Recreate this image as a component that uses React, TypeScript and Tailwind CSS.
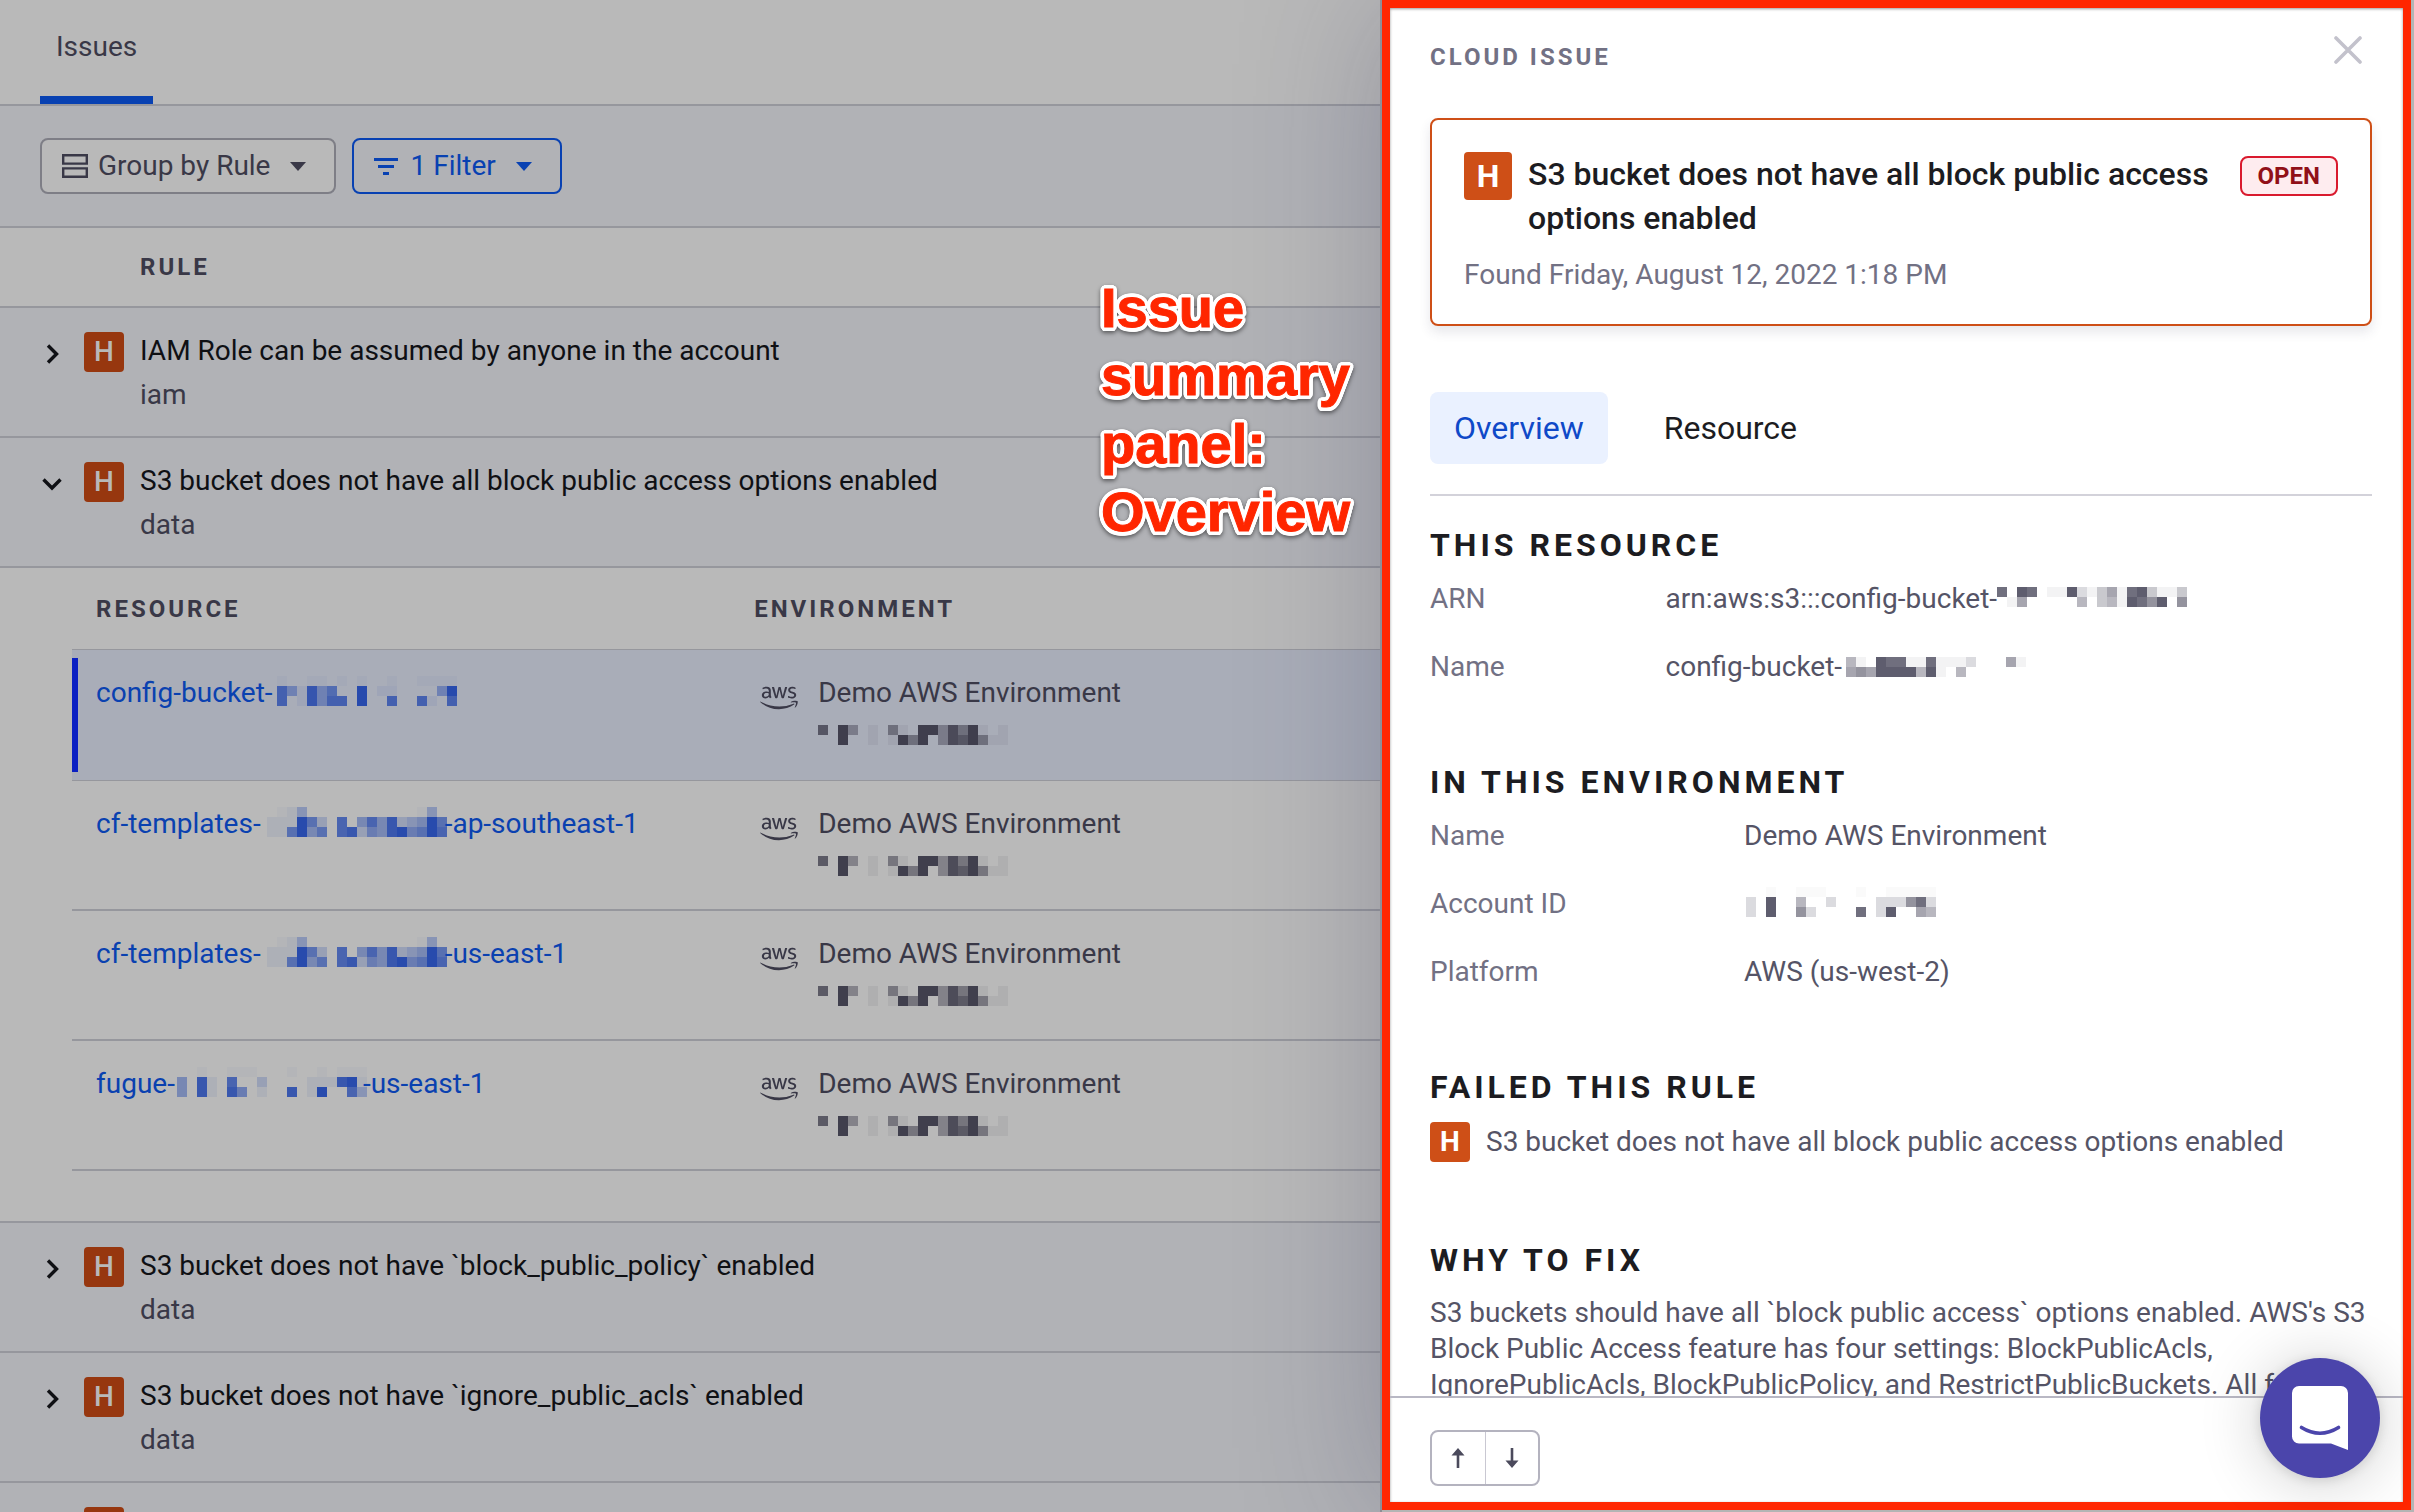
import React from "react";
import { FaAws } from "react-icons/fa";

/* A redacted value: rows of 10px cells, each digit giving a cell's strength (0-9). */
function Mosaic({ rows, className = "" }: { rows: string[]; className?: string }) {
  const width = rows[0].length * 10;
  const height = rows.length * 10;
  return (
    <svg
      width={width}
      height={height}
      viewBox={`0 0 ${width} ${height}`}
      shapeRendering="crispEdges"
      aria-hidden="true"
      className={`shrink-0 ${className}`}
    >
      {rows.flatMap((row, y) =>
        row.split("").map((level, x) =>
          level === "0" ? null : (
            <rect
              key={`${x}-${y}`}
              x={x * 10}
              y={y * 10}
              width="10"
              height="10"
              fill="currentColor"
              opacity={level === "-" ? 0.03 : level === "1" ? 0.07 : Number(level) / 9.5}
            />
          )
        )
      )}
    </svg>
  );
}

const CONFIG_ID = ["-00--0-0-00-00----", "741846009011000049", "701847709007007107"];
const TEMPLATE_ID = ["0-1300000000000-30", "111962070474823496", "116946078254895697"];
const FUGUE_ID = ["00-00---000-00-0---", "4081070020000111891", "4081085010080190073"];
const ENV_ID = ["7094010510994859101", "0090010195904879511"];

type Resource = { before: string; cells: string[]; gap: string; after: string; selected?: boolean };

const resources: Resource[] = [
  { before: "config-bucket-", cells: CONFIG_ID, gap: "ml-1", after: "", selected: true },
  { before: "cf-templates-", cells: TEMPLATE_ID, gap: "ml-1.5 -mr-0.5", after: "-ap-southeast-1" },
  { before: "cf-templates-", cells: TEMPLATE_ID, gap: "ml-1.5 -mr-0.5", after: "-us-east-1" },
  { before: "fugue-", cells: FUGUE_ID, gap: "ml-0.5 -mr-1", after: "-us-east-1" },
];

const rules = [
  { title: "IAM Role can be assumed by anyone in the account", family: "iam", open: false },
  { title: "S3 bucket does not have all block public access options enabled", family: "data", open: true },
  { title: "S3 bucket does not have `block_public_policy` enabled", family: "data", open: false },
  { title: "S3 bucket does not have `ignore_public_acls` enabled", family: "data", open: false },
  { title: "", family: "", open: false },
];

/* White outline of the callout text: shadows set on a circle round each glyph. */
const calloutOutline = Array.from({ length: 24 }, (_, i) => {
  const angle = (i * Math.PI) / 12;
  return `${(4 * Math.cos(angle)).toFixed(1)}px ${(4 * Math.sin(angle)).toFixed(1)}px 0 #fff`;
}).join(", ");

function Caret() {
  return (
    <svg width="16" height="9" viewBox="0 0 16 9" aria-hidden="true" className="shrink-0">
      <path d="M0 0h16L8 9z" fill="currentColor" />
    </svg>
  );
}

function Chevron({ open }: { open: boolean }) {
  return (
    <svg width="24" height="24" viewBox="0 0 24 24" fill="none" stroke="currentColor" strokeWidth="3.4" aria-hidden="true">
      <path d={open ? "M3.5 7.5 12 16l8.5-8.5" : "M8 3.5 16.5 12 8 20.5"} />
    </svg>
  );
}

function ResourceTable() {
  return (
    <table className="w-full border-separate border-spacing-0 text-left">
      <thead>
        <tr className="h-[82px] text-2xl tracking-[3px] text-[#393847]">
          <th className="w-[52%] border-b border-[#96979d] pl-6 font-bold">RESOURCE</th>
          <th className="border-b border-[#96979d] pl-0.5 font-bold">ENVIRONMENT</th>
        </tr>
      </thead>
      <tbody>
        {resources.map((r, i) => (
          <tr key={i} className={r.selected ? "h-[131px] bg-[#a9adb8]" : "h-[130px]"}>
            <td className={`relative pt-[21px] pl-6 align-top ${r.selected ? "border-b" : "border-b-2"} border-[#96979d]`}>
              {r.selected && <span className="absolute inset-y-2 left-0 w-1.5 bg-[#0a1fc2]" />}
              <a href="#resource" className="flex h-11 items-center text-[#0a41b0]">
                <span>{r.before}</span>
                <Mosaic rows={r.cells} className={`mb-1 text-[#2045ac] ${r.gap}`} />
                <span>{r.after}</span>
              </a>
            </td>
            <td className={`pt-[21px] align-top ${r.selected ? "border-b" : "border-b-2"} border-[#96979d]`}>
              <div className="flex gap-5 pl-2 leading-11">
                <FaAws className="mt-3 h-[30px] w-[38px] shrink-0 text-[#393847]" aria-hidden="true" />
                <div>
                  <p>Demo AWS Environment</p>
                  <div className="flex h-11 items-center">
                    <Mosaic rows={ENV_ID} className="mb-1" />
                  </div>
                </div>
              </div>
            </td>
          </tr>
        ))}
      </tbody>
    </table>
  );
}

function IssuesPage() {
  return (
    <main className="relative min-w-0 overflow-hidden bg-[#b9b9b9] text-[28px] text-[#393847]">
      <nav className="flex h-[106px] border-b-2 border-[#96979d] pl-10">
        <button className="border-b-8 border-[#0841b2] px-4 pb-0.5">Issues</button>
      </nav>

      <div className="flex gap-4 border-b-2 border-[#96979d] bg-[#b1b2b6] py-8 pl-10">
        <button className="flex h-14 items-center rounded-lg border-2 border-[#7e7e86] bg-[#b9b9b9] pr-7 pl-5">
          <svg width="26" height="24" viewBox="0 0 26 24" fill="none" stroke="currentColor" strokeWidth="2.4" aria-hidden="true">
            <path d="M1.2 1.2h23.6v8.4H1.2zM1.2 14.4h23.6v8.4H1.2z" />
          </svg>
          <span className="mr-5 ml-2.5">Group by Rule</span>
          <Caret />
        </button>
        <button className="flex h-14 items-center rounded-lg border-2 border-[#0841b2] pr-7 pl-5 text-[#0841b2]">
          <svg width="24" height="17" viewBox="0 0 24 17" fill="currentColor" aria-hidden="true">
            <path d="M0 0h24v3H0zM4 7h16v3H4zM9 14h6v3H9z" />
          </svg>
          <span className="mr-5 ml-3">1 Filter</span>
          <Caret />
        </button>
      </div>

      <table className="w-full border-separate border-spacing-0 text-left">
        <thead>
          <tr>
            <th className="h-20 border-b-2 border-[#96979d] pl-35 text-2xl font-bold tracking-[3px]">RULE</th>
          </tr>
        </thead>
        <tbody>
          {rules.map((rule, i) => (
            <React.Fragment key={i}>
              <tr>
                <td className="h-[130px] border-b-2 border-[#96979d] bg-[#b1b2b6] pt-[21px] pl-10 align-top">
                  <div className="flex items-start">
                    <button aria-label={`Toggle rule ${i + 1}`} className="mt-[13px] mr-5 text-[#0f1014]">
                      <Chevron open={rule.open} />
                    </button>
                    <span className="mt-[3px] mr-4 flex size-10 items-center justify-center rounded-sm bg-[#97370f] font-medium text-[#b9b9b9]">
                      {rule.title && "H"}
                    </span>
                    <div className="leading-11 whitespace-nowrap">
                      <p className="text-[#0f1014]">{rule.title}</p>
                      <p>{rule.family}</p>
                    </div>
                  </div>
                </td>
              </tr>
              {rule.open && (
                <tr>
                  <td className="border-b-2 border-[#96979d] pb-[50px] pl-18">
                    <ResourceTable />
                  </td>
                </tr>
              )}
            </React.Fragment>
          ))}
        </tbody>
      </table>
    </main>
  );
}

function SectionTitle({ children }: { children: React.ReactNode }) {
  return <h3 className="text-[32px] leading-11 font-bold tracking-[4px] text-[#1c1c21]">{children}</h3>;
}

function IssuePanel() {
  return (
    <aside className="relative flex min-h-0 border-l-2 border-[#8e8e96] bg-[#b4b4b4] pr-[3px] pb-0.5 text-[28px] text-[#555466] shadow-[0_0_130px_rgba(40,40,80,0.25)]">
      <div className="flex min-w-0 flex-1 flex-col border-8 border-[#ff2600] bg-white shadow-[inset_0_1px_3px_rgba(0,0,0,0.4)]">
        <div className="min-h-0 flex-1 overflow-hidden pr-[31px] pl-10">
          <header className="flex h-[110px] items-start justify-between pt-6">
            <h2 className="pt-2 text-2xl leading-[34px] font-bold tracking-[3px] text-[#727184]">CLOUD ISSUE</h2>
            <button aria-label="Close" className="mr-1.5 flex size-9 items-center justify-center text-[#c3c2cc]">
              <svg width="28" height="28" viewBox="0 0 28 28" fill="none" stroke="currentColor" strokeWidth="3.6" strokeLinecap="round" aria-hidden="true">
                <path d="M2 2l24 24M26 2 2 26" />
              </svg>
            </button>
          </header>

          <section className="rounded-lg border-2 border-[#ce4f17] px-8 pt-8 pb-[29px] shadow-[0_6px_12px_rgba(60,60,90,0.12)]">
            <div className="flex items-start gap-4">
              <span className="flex size-12 shrink-0 items-center justify-center rounded-sm bg-[#ce4f17] text-[32px] font-bold text-white">H</span>
              <h1 className="flex-1 text-[32px] leading-11 font-medium text-[#1c1c21]">
                S3 bucket does not have all block public access options enabled
              </h1>
              <span className="mt-1 flex h-10 items-center rounded-lg border-2 border-[#d91a2e] bg-[#feecef] px-4 text-2xl font-bold text-[#911018]">
                OPEN
              </span>
            </div>
            <p className="mt-[15px] leading-10 text-[#727184]">Found Friday, August 12, 2022 1:18 PM</p>
          </section>

          <div role="tablist" className="mt-[66px] flex gap-8 border-b-2 border-[#d3d2da] pb-7.5 text-[32px]">
            <button role="tab" aria-selected="true" className="h-18 rounded-lg bg-[#eaf1ff] px-6 text-[#0f49c8]">
              Overview
            </button>
            <button role="tab" aria-selected="false" className="h-18 px-6 text-[#1c1c21]">
              Resource
            </button>
          </div>

          <section className="mt-[27px]">
            <SectionTitle>THIS RESOURCE</SectionTitle>
            <dl className="mt-3 grid grid-cols-[1fr_3fr] gap-y-7 leading-10">
              <dt className="text-[#727184]">ARN</dt>
              <dd className="flex items-center">
                arn:aws:s3:::config-bucket-
                <Mosaic rows={["8098011921351893113", "0150000040341986906"]} className="mb-1" />
              </dd>
              <dt className="text-[#727184]">Name</dt>
              <dd className="flex items-center">
                config-bucket-
                <Mosaic rows={["410988118111200051", "565999949104000000"]} className="ml-1" />
              </dd>
            </dl>
          </section>

          <section className="mt-[73px]">
            <SectionTitle>IN THIS ENVIRONMENT</SectionTitle>
            <dl className="mt-3 grid grid-cols-[1fr_2fr] gap-y-7 leading-10">
              <dt className="text-[#727184]">Name</dt>
              <dd>Demo AWS Environment</dd>
              <dt className="text-[#727184]">Account ID</dt>
              <dd className="flex items-center">
                <Mosaic rows={["00-00---000-00-----", "2090040020000222682", "2090062000080290054"]} className="mb-1 ml-0.5" />
              </dd>
              <dt className="text-[#727184]">Platform</dt>
              <dd>AWS (us-west-2)</dd>
            </dl>
          </section>

          <section className="mt-[73px]">
            <SectionTitle>FAILED THIS RULE</SectionTitle>
            <div className="mt-3 flex items-center gap-4">
              <span className="flex size-10 items-center justify-center rounded-sm bg-[#ce4f17] font-bold text-white">H</span>
              <p>S3 bucket does not have all block public access options enabled</p>
            </div>
          </section>

          <section className="mt-[75px]">
            <SectionTitle>WHY TO FIX</SectionTitle>
            <p className="mt-[13px] leading-9">
              S3 buckets should have all `block public access` options enabled. AWS's S3 Block Public Access feature has
              four settings: BlockPublicAcls, IgnorePublicAcls, BlockPublicPolicy, and RestrictPublicBuckets. All four
            </p>
          </section>
        </div>

        <footer className="border-t-2 border-[#b9b8c4] pt-8 pb-4 pl-10">
          <div className="flex h-14 w-[110px] rounded-lg border-2 border-[#b4b3bf] text-[#4b4a5c]">
            <button aria-label="Previous issue" className="flex flex-1 items-center justify-center">
              <svg width="14" height="20" viewBox="0 0 14 20" aria-hidden="true">
                <path d="M7 0l6.5 7.5H8.300V20H5.700V7.500H.5z" fill="currentColor" />
              </svg>
            </button>
            <button aria-label="Next issue" className="flex flex-1 items-center justify-center border-l border-[#c9c8d2]">
              <svg width="14" height="20" viewBox="0 0 14 20" aria-hidden="true">
                <path d="M7 20l6.5-7.5H8.300V0H5.700v12.500H.5z" fill="currentColor" />
              </svg>
            </button>
          </div>
        </footer>
      </div>
    </aside>
  );
}

export default function App() {
  return (
    <div className="relative grid h-screen grid-cols-[1380fr_1034fr] grid-rows-1 overflow-hidden font-[Roboto,sans-serif]">
      <IssuesPage />
      <div className="relative grid min-h-0">
        <IssuePanel />
        <p
          className="absolute top-[274px] right-full mr-[30px] font-['Liberation_Sans',Arial,sans-serif] text-[56px] leading-[68px] font-bold text-[#ff2600] drop-shadow-[0_2px_2px_rgba(0,0,0,0.5)] [-webkit-text-stroke:1px_#ff2600]"
          style={{ textShadow: calloutOutline }}
        >
          Issue
          <br />
          summary
          <br />
          panel:
          <br />
          Overview
        </p>
      </div>
      <button
        aria-label="Open chat"
        className="absolute right-[34px] bottom-[34px] size-30 rounded-full bg-[#4b45ab] shadow-[0_2px_12px_rgba(0,0,0,0.12),0_4px_64px_rgba(0,0,0,0.2)]"
      >
        <svg viewBox="0 0 120 120" aria-hidden="true">
          <path d="M39 28h42a7 7 0 0 1 7 7v57l-17-6.5H39a7 7 0 0 1-7-7V35a7 7 0 0 1 7-7z" fill="#fff" />
          <path d="M41.5 69.5q18.5 11.5 37 0" fill="none" stroke="#4b45ab" strokeWidth="3.6" strokeLinecap="round" />
        </svg>
      </button>
    </div>
  );
}
